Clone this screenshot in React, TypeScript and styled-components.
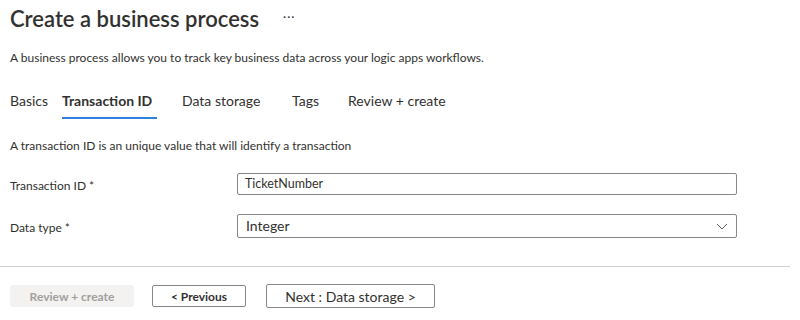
import styled, { createGlobalStyle } from "styled-components";

const Global = createGlobalStyle`
  body {
    margin: 0;
    background: #fff;
    font-family: Lato, "Liberation Sans", sans-serif;
    color: #323130;
  }
`;

const Page = styled.div`
  width: 790px;
`;

const Content = styled.div`
  padding: 0 10px;
`;

const TitleRow = styled.div`
  display: flex;
  align-items: center;
  height: 28px;
  margin-top: 5px;
`;

const Title = styled.h1`
  margin: 0;
  font-size: 22px;
  font-weight: 600;
  line-height: 28px;
`;

const More = styled.span`
  margin-left: 24px;
  font-size: 12px;
  letter-spacing: 1px;
  line-height: 1;
  margin-top: -4px;
`;

const Text = styled.p<{ $top: number }>`
  margin: ${(p) => p.$top}px 0 0;
  font-size: 12px;
  line-height: 18px;
`;

const Tabs = styled.div`
  display: flex;
  margin-top: 24px;
`;

const Tab = styled.div<{ $active?: boolean; $width: number }>`
  box-sizing: border-box;
  position: relative;
  width: ${(p) => p.$width}px;
  height: 28px;
  padding-bottom: 6px;
  font-size: 14px;
  line-height: 20px;
  font-weight: ${(p) => (p.$active ? 700 : 400)};
  white-space: nowrap;
  &::after {
    content: "";
    display: ${(p) => (p.$active ? "block" : "none")};
    position: absolute;
    left: 0;
    bottom: 0;
    width: 95px;
    height: 2px;
    background: #2f7fdc;
  }
`;

const Form = styled.div`
  display: grid;
  grid-template-columns: 227px 500px;
  row-gap: 19px;
  margin-top: 18px;
  align-items: center;
`;

const Label = styled.label`
  font-size: 12px;
  line-height: 18px;
  padding-top: 3px;
`;

const Input = styled.div`
  box-sizing: border-box;
  height: 22px;
  border: 1px solid #8a8886;
  border-radius: 2px;
  padding: 0 7px;
  font-size: 12.5px;
  line-height: 20px;
`;

const Select = styled.div`
  box-sizing: border-box;
  height: 24px;
  border: 1px solid #8a8886;
  border-radius: 2px;
  padding: 0 8px;
  font-size: 14px;
  line-height: 22px;
  display: flex;
  justify-content: space-between;
  align-items: center;
`;

const Chevron = styled.svg`
  width: 12px;
  height: 12px;
`;

const Divider = styled.hr`
  margin: 28px 0 0;
  border: 0;
  border-top: 1px solid #d2d0ce;
`;

const Footer = styled.div`
  display: flex;
  align-items: center;
  padding: 17px 10px 0;
`;

const Button = styled.button<{
  $width: number;
  $height?: number;
  $gap: number;
  $size?: number;
  $weight?: number;
  $disabled?: boolean;
}>`
  box-sizing: border-box;
  width: ${(p) => p.$width}px;
  height: ${(p) => p.$height ?? 22}px;
  margin-right: ${(p) => p.$gap}px;
  padding: 0;
  font-family: inherit;
  font-size: ${(p) => p.$size ?? 12}px;
  font-weight: ${(p) => p.$weight ?? 700};
  border-radius: 2px;
  color: ${(p) => (p.$disabled ? "#a19f9d" : "#323130")};
  background: ${(p) => (p.$disabled ? "#f3f2f1" : "#fff")};
  border: 1px solid ${(p) => (p.$disabled ? "#f3f2f1" : "#8a8886")};
`;

export default function App() {
  return (
    <Page>
      <Global />
      <Content>
        <TitleRow>
          <Title>Create a business process</Title>
          <More>···</More>
        </TitleRow>
        <Text $top={16}>
          A business process allows you to track key business data across your logic apps workflows.
        </Text>
        <Tabs>
          <Tab $width={52}>Basics</Tab>
          <Tab $width={120} $active>
            Transaction ID
          </Tab>
          <Tab $width={110}>Data storage</Tab>
          <Tab $width={56}>Tags</Tab>
          <Tab $width={110}>Review + create</Tab>
        </Tabs>
        <Text $top={18}>A transaction ID is an unique value that will identify a transaction</Text>
        <Form>
          <Label>Transaction ID *</Label>
          <Input>TicketNumber</Input>
          <Label>Data type *</Label>
          <Select>
            <span>Integer</span>
            <Chevron viewBox="0 0 12 12" fill="none" stroke="#605e5c" strokeWidth="1">
              <path d="M1 4 L6 9 L11 4" />
            </Chevron>
          </Select>
        </Form>
      </Content>
      <Divider />
      <Footer>
        <Button $width={124} $gap={18} $disabled>
          Review + create
        </Button>
        <Button $width={94} $gap={20}>
          &lt; Previous
        </Button>
        <Button $width={169} $height={24} $gap={0} $size={14} $weight={400}>
          Next : Data storage &gt;
        </Button>
      </Footer>
    </Page>
  );
}
